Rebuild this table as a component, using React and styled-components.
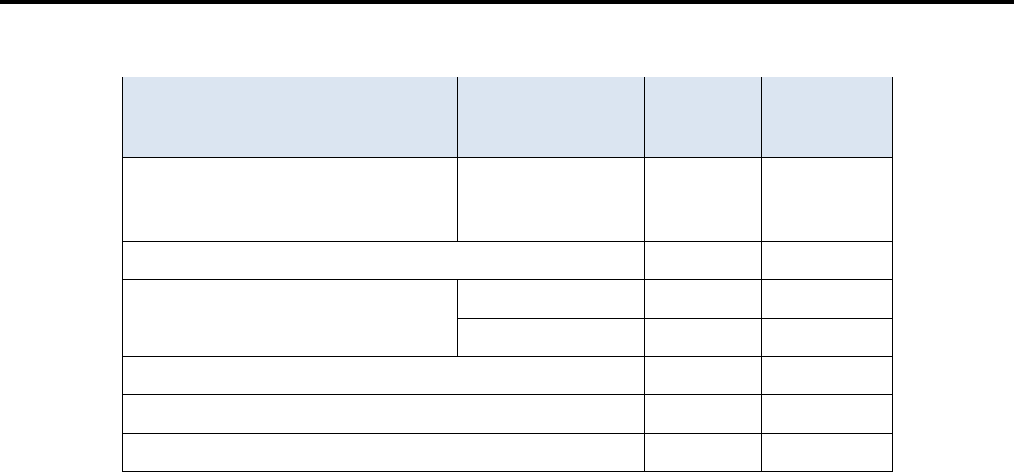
import React from "react";
import styled, { createGlobalStyle } from "styled-components";

const GlobalStyle = createGlobalStyle`
  body {
    margin: 0;
    background: #ffffff;
    font-family: "Liberation Sans", Arial, sans-serif;
  }
`;

const TopRule = styled.div`
  height: 4px;
  width: 100%;
  background: #000000;
`;

const Page = styled.div`
  display: flex;
  justify-content: center;
  padding-top: 73px;
`;

const Grid = styled.div`
  display: grid;
  grid-template-columns: 334px 186px 116px 130px;
  grid-template-rows: 80px 83px 37px 38px 37px 37px 38px 37px;
  gap: 1px;
  padding: 0 1px 1px 1px;
  background: #000000;
`;

const Cell = styled.div`
  background: ${({ $head }) => ($head ? "#dbe5f1" : "#ffffff")};
  grid-column: ${({ $span }) => ($span ? `span ${$span}` : "auto")};
  grid-row: ${({ $rows }) => ($rows ? `span ${$rows}` : "auto")};
`;

const rows = [
  [{ head: true }, { head: true }, { head: true }, { head: true }],
  [{}, {}, {}, {}],
  [{ span: 2 }, {}, {}],
  [{ rows: 2 }, {}, {}, {}],
  [{}, {}, {}],
  [{ span: 2 }, {}, {}],
  [{ span: 2 }, {}, {}],
  [{ span: 2 }, {}, {}],
];

export default function App() {
  return (
    <>
      <GlobalStyle />
      <TopRule />
      <Page>
        <Grid>
          {rows.map((row, r) =>
            row.map((c, i) => (
              <Cell
                key={`${r}-${i}`}
                $head={c.head}
                $span={c.span}
                $rows={c.rows}
              />
            ))
          )}
        </Grid>
      </Page>
    </>
  );
}
